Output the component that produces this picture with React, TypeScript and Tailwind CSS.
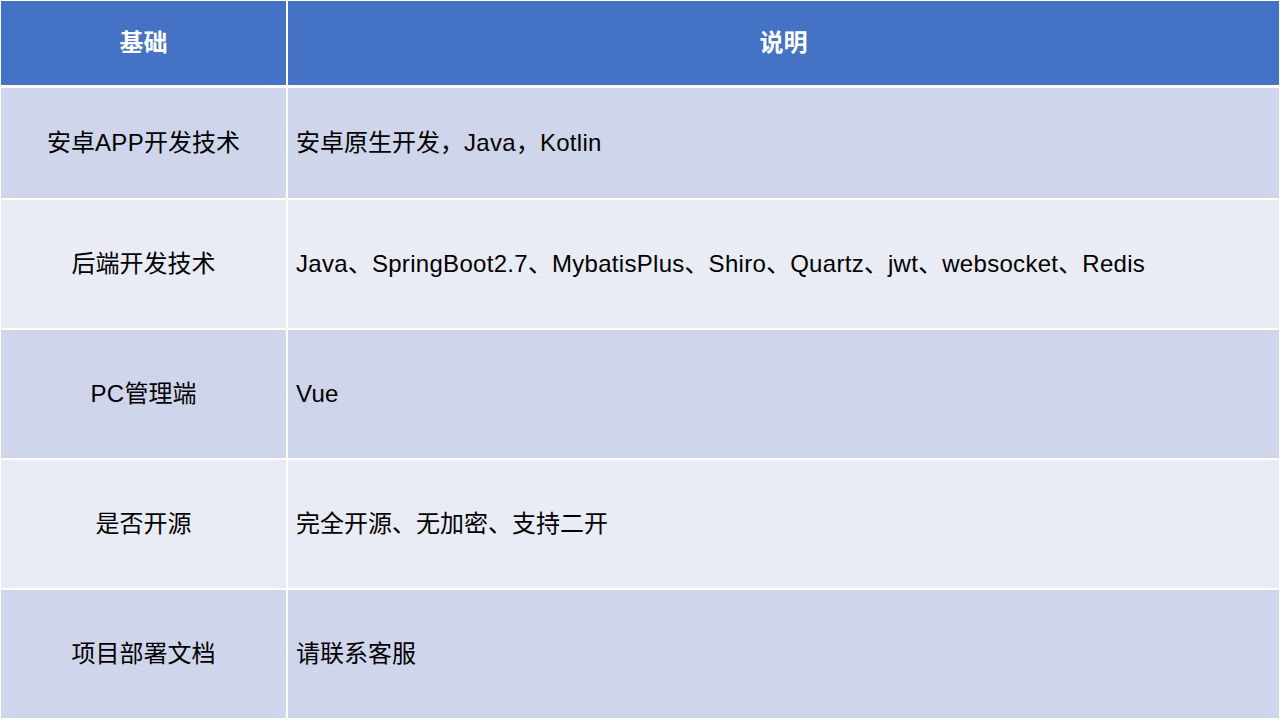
const rows = [
  { name: "安卓APP开发技术", desc: "安卓原生开发，Java，Kotlin", h: "h-[110px]", bg: "bg-[#cfd5ea]" },
  { name: "后端开发技术", desc: "Java、SpringBoot2.7、MybatisPlus、Shiro、Quartz、jwt、websocket、Redis", h: "h-[128px]", bg: "bg-[#e9ebf5]" },
  { name: "PC管理端", desc: "Vue", h: "h-[128px]", bg: "bg-[#cfd5ea]" },
  { name: "是否开源", desc: "完全开源、无加密、支持二开", h: "h-[128px]", bg: "bg-[#e9ebf5]" },
  { name: "项目部署文档", desc: "请联系客服", h: "h-[128px]", bg: "bg-[#cfd5ea]" },
];

// latin runs are set a touch wider than the CJK ones
function Mixed({ text }: { text: string }) {
  const parts = text.split(/([A-Za-z0-9.]+)/);
  return (
    <span>
      {parts.map((p, i) =>
        /^[A-Za-z0-9.]+$/.test(p) ? (
          <span key={i} className="tracking-[0.3px]">{p}</span>
        ) : (
          <span key={i}>{p}</span>
        )
      )}
    </span>
  );
}

export default function App() {
  return (
    <div
      className="w-[1280px] h-[720px] bg-white p-[1px] overflow-hidden text-[24px] text-black"
      style={{ fontFamily: '"Liberation Sans", Arial, "Noto Sans CJK SC", sans-serif' }}
    >
      {/* header */}
      <div className="flex gap-[2px] h-[84px] mb-[3px]">
        <div className="w-[285px] bg-[#4472c4] flex items-center justify-center text-white font-bold">
          基础
        </div>
        <div className="flex-1 bg-[#4472c4] flex items-center justify-center text-white font-bold">
          说明
        </div>
      </div>

      <div className="flex flex-col gap-[2px]">
        {rows.map((row) => (
          <div key={row.name} className={`flex gap-[2px] ${row.h}`}>
            <div className={`w-[285px] ${row.bg} flex items-center justify-center`}>
              <Mixed text={row.name} />
            </div>
            <div className={`flex-1 ${row.bg} flex items-center pl-[8px]`}>
              <Mixed text={row.desc} />
            </div>
          </div>
        ))}
      </div>
    </div>
  );
}
